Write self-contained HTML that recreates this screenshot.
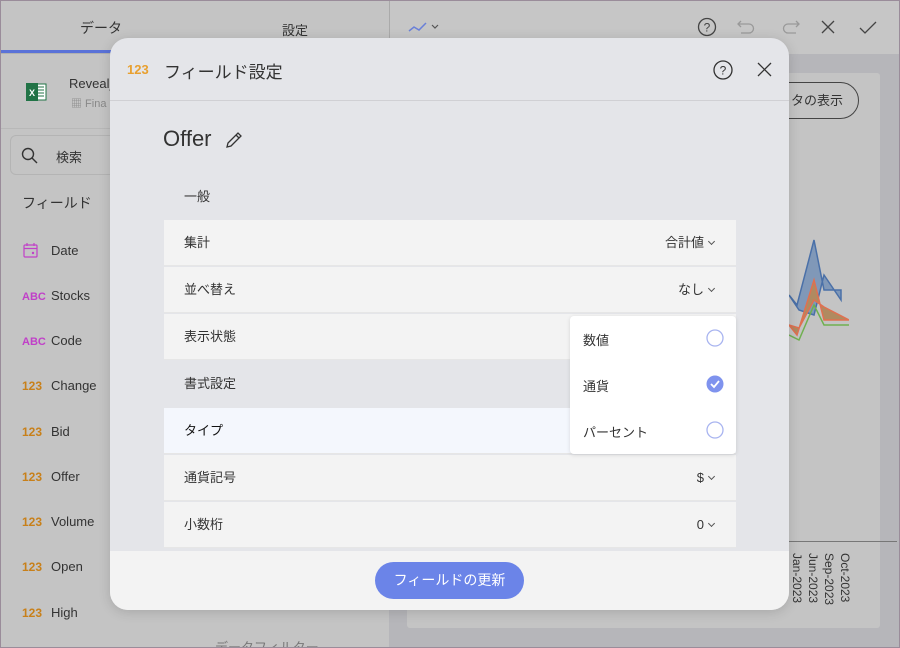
<!DOCTYPE html>
<html><head><meta charset="utf-8"><style>
*{box-sizing:border-box;margin:0;padding:0}
html,body{width:900px;height:648px;overflow:hidden}
body{position:relative;font-family:"Liberation Sans","Noto Sans CJK JP",sans-serif;color:#333;background:#b6b6ba}
.abs{position:absolute}
.frame{position:absolute;left:0;top:0;width:900px;height:648px;border:1px solid #9a8c9a;z-index:50;pointer-events:none}
.num{color:#c8801a;font-weight:bold;font-size:12px}
.abc{color:#c040c8;font-weight:bold;font-size:11px}
.row{position:absolute;left:164px;width:572px;height:46px;background:#f3f3f3;font-size:13px;padding-left:20px;line-height:46px;border-bottom:1px solid #e6e6e6}
.val{position:absolute;right:22px;top:0;font-size:13px}
.chev{display:inline-block;width:5px;height:5px;border-right:1px solid #555;border-bottom:1px solid #555;transform:rotate(45deg);margin-left:5px;position:relative;top:-3px}
.fi{position:absolute;left:22px;font-size:13px}
.fi span.t{position:absolute;left:29px;white-space:nowrap;color:#333}
.xl{position:absolute;top:553px;font-size:12px;writing-mode:vertical-rl;color:#333;white-space:nowrap}
</style></head><body>
<div class="abs" style="left:0;top:0;width:900px;height:54px;background:#c6c6c6"></div>
<div class="abs" style="left:0;top:0;width:389px;height:648px;background:#c4c4c4"></div>
<div class="abs" style="left:389px;top:0;width:1px;height:54px;background:#aaa"></div>
<div class="abs" style="left:80px;top:18px;font-size:14px">データ</div>
<div class="abs" style="left:282px;top:20px;font-size:13px">設定</div>
<div class="abs" style="left:0;top:50px;width:195px;height:3px;background:#5a72d8"></div>
<div class="abs" style="left:0;top:53px;width:389px;height:1px;background:#b0b0b0"></div>
<svg class="abs" style="left:408px;top:20px" width="34" height="14"><polyline points="1,11 6,7 11,10 18,3" fill="none" stroke="#6a80d8" stroke-width="1.5"/><polyline points="24,5 27,8 30,5" fill="none" stroke="#555" stroke-width="1.2"/></svg>
<svg class="abs" style="left:697px;top:17px" width="190" height="22" fill="none" stroke="#444" stroke-width="1.3">
<circle cx="10" cy="10" r="8.5"/><text x="10" y="14.5" font-size="12" text-anchor="middle" fill="#444" stroke="none" font-family="Liberation Sans">?</text>
<path d="M44 4 L41 7 L44 10 M41 7 H52 A4.5 4.5 0 0 1 52 16 H44" stroke="#999"/>
<path d="M99 4 L102 7 L99 10 M102 7 H91 A4.5 4.5 0 0 0 91 16 H99" stroke="#999"/>
<path d="M125 4 L137 16 M137 4 L125 16"/>
<path d="M163 11 L168 16 L179 5"/>
</svg>
<div class="abs" style="left:0;top:128px;width:389px;height:1px;background:#b8b8b8"></div>
<svg class="abs" style="left:25px;top:81px" width="22" height="22"><rect x="6" y="3" width="15" height="16" fill="#fff" stroke="#217346"/><path d="M13 6H19M13 9H19M13 12H19M13 15H19" stroke="#217346"/><rect x="1" y="2" width="12" height="18" fill="#217346"/><text x="7" y="15" font-size="9" font-weight="bold" fill="#fff" text-anchor="middle" font-family="Liberation Sans">X</text></svg>
<div class="abs" style="left:69px;top:76px;font-size:13px">Reveal_</div>
<div class="abs" style="left:71px;top:95px;font-size:11px;color:#888">▦ Fina</div>
<div class="abs" style="left:10px;top:135px;width:120px;height:40px;border:1px solid #b4b4b4;border-radius:6px"></div>
<svg class="abs" style="left:21px;top:147px" width="18" height="18" fill="none" stroke="#333" stroke-width="1.4"><circle cx="7" cy="7" r="5.5"/><path d="M11 11 L16 16"/></svg>
<div class="abs" style="left:56px;top:147px;font-size:13px">検索</div>
<div class="abs" style="left:22px;top:193px;font-size:14px">フィールド</div>
<svg class="abs" style="left:23px;top:243px" width="15" height="15" fill="none" stroke="#c040c8" stroke-width="1.2"><rect x="1" y="2" width="13" height="12" rx="1"/><path d="M1 5.5H14M4 0V3M11 0V3"/><circle cx="10" cy="10" r=".6" fill="#c040c8"/></svg>
<div class="fi" style="top:243px"><span class="t">Date</span></div>
<div class="fi" style="top:288px"><span class="abc">ABC</span><span class="t">Stocks</span></div>
<div class="fi" style="top:333px"><span class="abc">ABC</span><span class="t">Code</span></div>
<div class="fi" style="top:378px"><span class="num">123</span><span class="t">Change</span></div>
<div class="fi" style="top:424px"><span class="num">123</span><span class="t">Bid</span></div>
<div class="fi" style="top:469px"><span class="num">123</span><span class="t">Offer</span></div>
<div class="fi" style="top:514px"><span class="num">123</span><span class="t">Volume</span></div>
<div class="fi" style="top:559px"><span class="num">123</span><span class="t">Open</span></div>
<div class="fi" style="top:605px"><span class="num">123</span><span class="t">High</span></div>
<div class="abs" style="left:215px;top:637px;font-size:13px;color:#777;white-space:nowrap">データフィルター</div>
<div class="abs" style="left:407px;top:73px;width:473px;height:555px;background:#c4c4c4;border-radius:3px"></div>
<div class="abs" style="left:760px;top:82px;width:99px;height:37px;border:1px solid #444;border-radius:19px;font-size:13px;line-height:35px;padding-left:30px">タの表示</div>
<svg class="abs" style="left:789px;top:235px" width="60" height="110"><path d="M0 60 L8 70 L25 5 L35 55 L52 55 L52 65 L35 40 L25 80 L10 75 Z" fill="#8098b8" stroke="#4a70a8" stroke-width="1.5"/><path d="M0 90 L8 100 L25 45 L35 85 L60 85 L35 72 L25 65 L10 93 Z" fill="#b08a60" stroke="#e07050" stroke-width="1.5"/><path d="M0 100 L10 105 L25 70 L35 90 L60 90" fill="none" stroke="#70b050" stroke-width="1.5"/></svg>
<div class="abs" style="left:789px;top:541px;width:108px;height:1px;background:#777"></div>
<div class="xl" style="left:790px">Jan-2023</div>
<div class="xl" style="left:806px">Jun-2023</div>
<div class="xl" style="left:822px">Sep-2023</div>
<div class="xl" style="left:838px">Oct-2023</div>
<div class="abs" style="left:110px;top:38px;width:679px;height:572px;background:#e4e5e9;border-radius:18px;overflow:hidden;box-shadow:0 2px 12px rgba(0,0,0,.15)">
 <div class="abs" style="left:0;top:62px;width:679px;height:1px;background:#d0d0d4"></div>
 <div class="abs" style="left:0;top:513px;width:679px;height:59px;background:#f3f3f3"></div>
</div>
<div class="abs num" style="left:127px;top:62px;font-size:13px;font-weight:bold;color:#e8a030">123</div>
<div class="abs" style="left:164px;top:58px;font-size:17px">フィールド設定</div>
<svg class="abs" style="left:713px;top:59px" width="64" height="22" fill="none" stroke="#333" stroke-width="1.3"><circle cx="10" cy="11" r="9"/><text x="10" y="15.5" font-size="12" text-anchor="middle" fill="#333" stroke="none" font-family="Liberation Sans">?</text><path d="M45 4 L58 17 M58 4 L45 17"/></svg>
<div class="abs" style="left:163px;top:126px;font-size:22px">Offer</div>
<svg class="abs" style="left:224px;top:130px" width="20" height="20" fill="none" stroke="#333" stroke-width="1.3"><path d="M3 17 L4 13 L14 3 L17 6 L7 16 Z M12 5 L15 8"/></svg>
<div class="abs" style="left:184px;top:186px;font-size:13px">一般</div>
<div class="row" style="top:220px">集計<span class="val">合計値<i class="chev"></i></span></div>
<div class="row" style="top:267px">並べ替え<span class="val">なし<i class="chev"></i></span></div>
<div class="row" style="top:314px">表示状態</div>
<div class="row" style="top:361px;background:#e4e5e9;border:none">書式設定</div>
<div class="row" style="top:408px;background:#f4f7fd;color:#111">タイプ</div>
<div class="row" style="top:455px">通貨記号<span class="val">$<i class="chev"></i></span></div>
<div class="row" style="top:502px">小数桁<span class="val">0<i class="chev"></i></span></div>
<div class="abs" style="left:570px;top:316px;width:166px;height:138px;background:#fff;border-radius:4px;box-shadow:0 1px 4px rgba(0,0,0,.12)">
 <div class="abs" style="left:13px;top:14px;font-size:13px">数値</div>
 <div class="abs" style="left:13px;top:60px;font-size:13px">通貨</div>
 <div class="abs" style="left:13px;top:106px;font-size:13px">パーセント</div>
 <svg class="abs" style="left:135px;top:13px" width="20" height="110"><circle cx="10" cy="9" r="8" fill="none" stroke="#a8b4f0" stroke-width="1.3"/><circle cx="10" cy="55" r="8.5" fill="#7f93ee"/><path d="M6 55 L9 58 L14 52" fill="none" stroke="#fff" stroke-width="1.8"/><circle cx="10" cy="101" r="8" fill="none" stroke="#a8b4f0" stroke-width="1.3"/></svg>
</div>
<div class="abs" style="left:375px;top:562px;width:149px;height:37px;background:#6b84e8;border-radius:19px;color:#fff;font-size:14px;text-align:center;line-height:37px">フィールドの更新</div>
<div class="frame"></div>
</body></html>
